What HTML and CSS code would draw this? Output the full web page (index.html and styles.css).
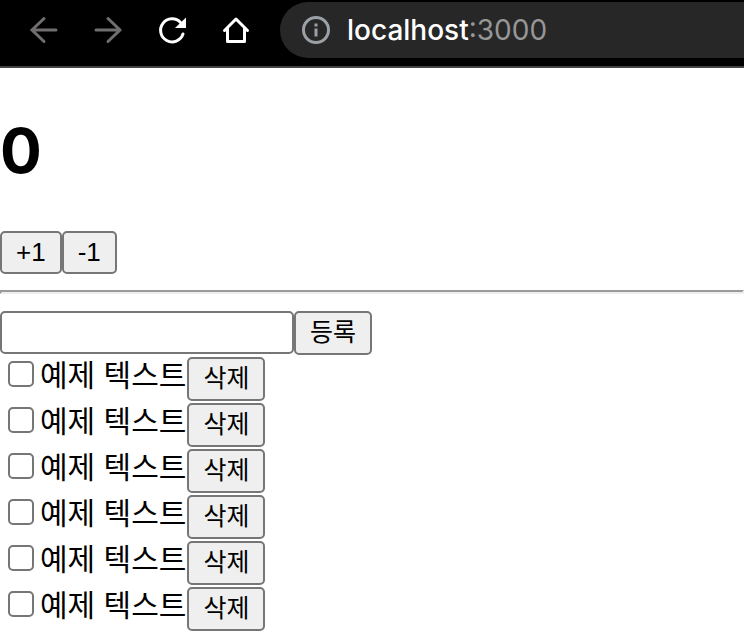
FILE: index.html
```html
<!DOCTYPE html>
<html lang="ko">
<head>
    <meta charset="UTF-8" />
    <title>localhost:3000</title>
    <link rel="stylesheet" href="styles.css">
</head>
<body>
    <header class="toolbar">
        <nav class="nav-buttons">
            <button class="icon-button disabled" aria-label="Back">
                <svg width="32" height="32" viewBox="0 0 32 32"><path d="M28 16H4M16 4.500L4 16L16 27.500" /></svg>
            </button>
            <button class="icon-button disabled" aria-label="Forward">
                <svg width="32" height="32" viewBox="0 0 32 32"><path d="M4 16H28M16 4.500L28 16L16 27.500" /></svg>
            </button>
            <button class="icon-button" aria-label="Reload">
                <svg width="32" height="32" viewBox="0 0 32 32"><path stroke-linecap="round" d="M27 20A11.500 11.500 0 1 1 24.500 8.500" /><path class="solid" d="M30 3.500V14H19Z" /></svg>
            </button>
            <button class="icon-button" aria-label="Home">
                <svg width="32" height="32" viewBox="0 0 32 32"><path stroke-linecap="round" stroke-linejoin="round" d="M4.500 16.500L16 5L27.500 16.500M7.500 14.500V27.500H24.500V14.500" /></svg>
            </button>
        </nav>
        <div class="address">
            <svg class="info" width="28" height="28" viewBox="0 0 28 28"><circle cx="14" cy="14" r="12.500" /><path d="M14 12.500V20.500M14 7.500V10.500" /></svg>
            <span class="host">localhost</span><span class="port">:3000</span>
        </div>
    </header>

    <main>
        <h1>0</h1>
        <div class="row">
            <button class="btn">+1</button>
            <button class="btn">-1</button>
        </div>
        <hr />
        <form class="row" onsubmit="return false">
            <input class="text-input" type="text" aria-label="할 일" />
            <button class="btn btn-ko">등록</button>
        </form>
        <div class="todo">
            <input type="checkbox" id="todo1" /><label for="todo1">예제 텍스트</label><button class="btn btn-ko">삭제</button>
        </div>
        <div class="todo">
            <input type="checkbox" id="todo2" /><label for="todo2">예제 텍스트</label><button class="btn btn-ko">삭제</button>
        </div>
        <div class="todo">
            <input type="checkbox" id="todo3" /><label for="todo3">예제 텍스트</label><button class="btn btn-ko">삭제</button>
        </div>
        <div class="todo">
            <input type="checkbox" id="todo4" /><label for="todo4">예제 텍스트</label><button class="btn btn-ko">삭제</button>
        </div>
        <div class="todo">
            <input type="checkbox" id="todo5" /><label for="todo5">예제 텍스트</label><button class="btn btn-ko">삭제</button>
        </div>
        <div class="todo">
            <input type="checkbox" id="todo6" /><label for="todo6">예제 텍스트</label><button class="btn btn-ko">삭제</button>
        </div>
    </main>
</body>
</html>
```
FILE: styles.css
```css
* {
    box-sizing: border-box;
}
body {
    margin: 0;
    background-color: #fff;
    color: #000;
    font-family: Inter, 'Noto Sans CJK KR', sans-serif;
}
.toolbar {
    display: flex;
    height: 68px;
    padding: 2px 0 8px 28px;
    background-color: #000;
    border-bottom: 2px solid #454243;
}
.nav-buttons {
    display: flex;
    flex-shrink: 0;
    align-items: center;
    gap: 32px;
    margin-right: 28px;
}
.icon-button {
    width: 32px;
    height: 32px;
    padding: 0;
    border: none;
    background: none;
    color: #fff;
}
.icon-button.disabled {
    color: #706e6f;
}
svg {
    display: block;
    fill: none;
    stroke: currentColor;
    stroke-width: 3;
}
.disabled svg {
    stroke-linecap: round;
}
.solid {
    fill: currentColor;
    stroke: none;
}
.address {
    display: flex;
    flex: 1;
    align-items: center;
    padding-left: 22px;
    border-radius: 28px 0 0 28px;
    background-color: #272727;
    font-size: 28px;
}
.info {
    margin-right: 17px;
    color: #9aa0a6;
}
.host {
    color: #fff;
    font-weight: 500;
}
.port {
    color: #979797;
}
h1 {
    margin: 44px 0 42px;
    font-size: 62px;
    line-height: 77px;
}
.row {
    display: flex;
    align-items: flex-start;
}
.btn {
    height: 43px;
    padding: 0 14px 2px;
    border: 2px solid #767676;
    border-radius: 5px;
    background-color: #efefef;
    color: #000;
    font-family: 'Liberation Sans', sans-serif;
    font-size: 26px;
    line-height: 36px;
}
.btn-ko {
    height: 44px;
    padding-bottom: 6px;
    font-family: 'Noto Sans CJK KR', sans-serif;
    font-size: 25px;
    line-height: 34px;
}
hr {
    height: 4px;
    margin: 16px 0 17px;
    border: 2px solid #eee;
    border-top-color: #9a9a9a;
    border-left-color: #9a9a9a;
}
.text-input {
    width: 294px;
    height: 43px;
    padding: 2px 4px;
    border: 2px solid #767676;
    border-radius: 5px;
    font-size: 26px;
}
.todo {
    display: flex;
    align-items: flex-start;
    margin-top: 2px;
    font-family: 'Noto Sans CJK KR', sans-serif;
    font-size: 30px;
    line-height: 32px;
}
.todo label {
    padding-right: 1px;
}
.todo input {
    appearance: none;
    width: 26px;
    height: 26px;
    margin: 4px 6px 0 8px;
    border: 2px solid #767676;
    border-radius: 5px;
    background-color: #fff;
}
.todo input:checked {
    background-color: #0075ff;
}
```
